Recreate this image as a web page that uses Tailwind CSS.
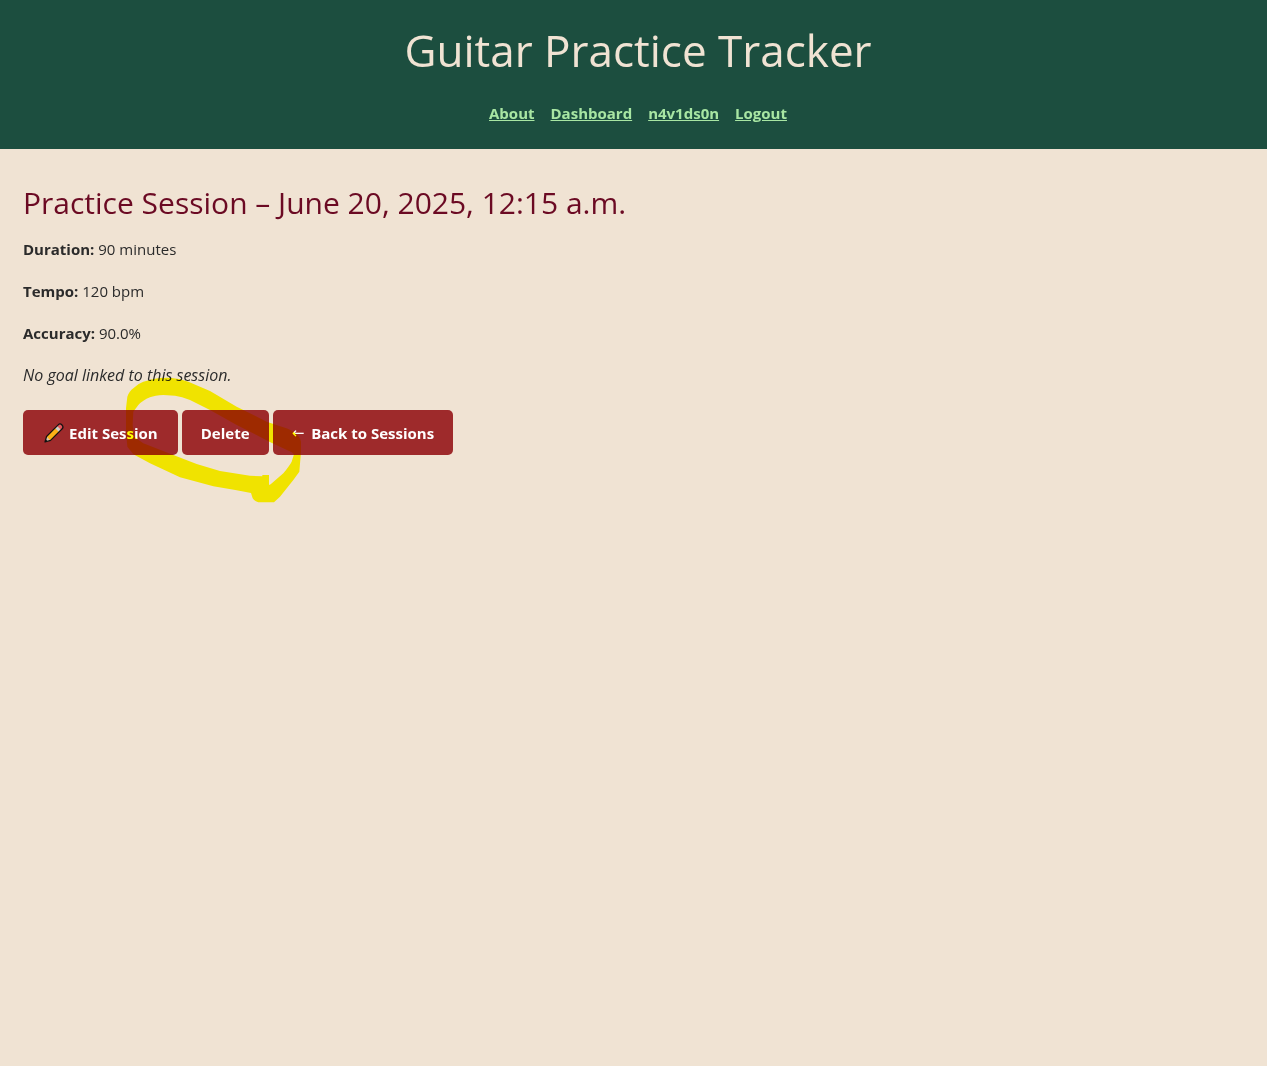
<!DOCTYPE html>
<html lang="en">
<head>
<meta charset="utf-8">
<meta name="viewport" content="width=device-width, initial-scale=1">
<title>Guitar Practice Tracker</title>
<script src="https://cdn.jsdelivr.net/npm/@tailwindcss/browser@4"></script>
</head>
<body class="min-h-screen bg-[#f0e3d3] font-['Open_Sans','Noto_Sans',sans-serif] text-[15px] leading-[26px] text-[#2b2b2b]">
<header class="flex flex-col items-center bg-[#1c4e3f] pt-4 pb-[22px] pl-[9px]">
  <h1 class="text-[44px] leading-[68px] text-[#f0e3d3]">Guitar Practice Tracker</h1>
  <nav class="mt-4 flex gap-4 font-bold leading-[27px] text-[#a8e6a3]">
    <a href="#" class="underline">About</a>
    <a href="#" class="underline">Dashboard</a>
    <a href="#" class="underline">n4v1ds0n</a>
    <a href="#" class="underline">Logout</a>
  </nav>
</header>
<main class="relative px-[23px] pt-8">
  <h2 class="mb-[11px] text-[30px] leading-[44px] text-[#6b0a23]">Practice Session – June 20, 2025, 12:15 a.m.</h2>
  <div class="flex flex-col gap-4">
    <p><strong>Duration:</strong> 90 minutes</p>
    <p><strong>Tempo:</strong> 120 bpm</p>
    <p><strong>Accuracy:</strong> 90.0%</p>
    <p class="text-base leading-[26px]"><em>No goal linked to this session.</em></p>
  </div>
  <div class="mt-[22px] flex gap-1 font-bold text-white">
    <a href="#" class="flex h-[45px] items-center gap-1 rounded-[5px] bg-[#9e2a2b] px-5">
      <svg class="size-[22px]" viewBox="0 0 22 22" aria-hidden="true">
        <g transform="translate(2 20) rotate(-45)">
          <path d="M0 0 5-2.800H21.500Q24-2.800 24 0Q24 2.800 21.500 2.800H5Z" fill="#fbb117"/>
          <path d="M17-2.800H20V2.800H17Z" fill="#d0d0d0"/>
          <path d="M20-2.800H21.500Q24-2.800 24 0Q24 2.800 21.500 2.800H20Z" fill="#e5545c"/>
          <path d="M0 0 5-2.800V2.800Z" fill="#d9c4ae"/>
          <path d="M0 0 2.500-1.400V1.400Z" fill="#111"/>
          <path d="M0 0 5-2.800H21.500Q24-2.800 24 0Q24 2.800 21.500 2.800H5Z" fill="none" stroke="#111" stroke-width="1.200" stroke-linejoin="round"/>
        </g>
      </svg>
      Edit Session</a>
    <button type="button" class="h-[45px] min-w-[87px] rounded-[5px] bg-[#9e2a2b] px-[19px]">Delete</button>
    <a href="#" class="flex h-[45px] items-center gap-[7px] rounded-[5px] bg-[#9e2a2b] px-[19px]"><span class="font-['DejaVu_Sans'] font-normal">←</span>Back to Sessions</a>
  </div>
  <!-- Highlighter loop drawn over the Delete button -->
  <svg class="pointer-events-none absolute top-[216px] left-[110px] h-[150px] w-[200px] mix-blend-multiply" viewBox="0 0 600 450" aria-hidden="true">
    <path fill="#ff0" fill-rule="evenodd" d="M48 130 52 95Q58 78 70 70Q84 55 100 50L130 42Q160 37 185 39Q212 41 235 50L300 78 380 125 470 170 520 187Q545 194 555 205Q572 217 573 230V260L568 320 550 345 510 395 492 412H445Q433 408 428 400L423 384 380 376 310 364 210 337 120 295 70 268 52 245 48 200ZM70 140 68 180 72 215 100 235 190 270 260 297 330 318 420 332 457 334V330H477V360L482 358 520 325Q540 300 545 290L552 268 545 262 478 230 380 180 300 135 240 105Q215 95 195 92L160 90Q135 91 120 97Q98 106 85 120Z"/>
  </svg>
</main>
</body>
</html>
